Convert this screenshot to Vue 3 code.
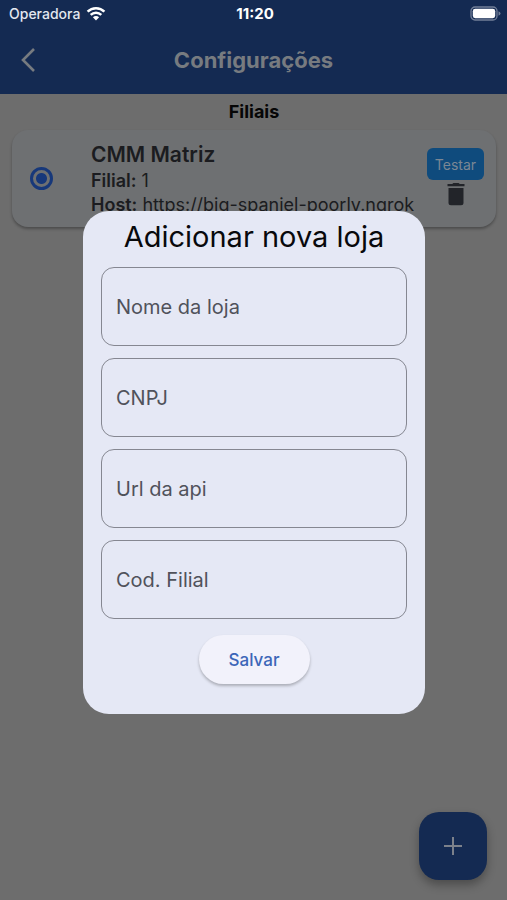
<script setup>
import { ref } from 'vue';

const selected = ref('1');

const stores = ref([
  {
    id: '1',
    name: 'CMM Matriz',
    branch: '1',
    host: 'https://big-spaniel-poorly.ngrok',
  },
]);

const fields = [
  { id: 'name', label: 'Nome da loja' },
  { id: 'cnpj', label: 'CNPJ' },
  { id: 'url', label: 'Url da api' },
  { id: 'branch', label: 'Cod. Filial' },
];

const form = ref({ name: '', cnpj: '', url: '', branch: '' });

const isVisible = ref(true);

const openDialog = () => {
  isVisible.value = true;
};

const removeStore = (id) => {
  stores.value = stores.value.filter((store) => store.id !== id);
};

const save = () => {
  stores.value.push({
    id: String(Date.now()),
    name: form.value.name,
    branch: form.value.branch,
    host: form.value.url,
  });
  form.value = { name: '', cnpj: '', url: '', branch: '' };
  isVisible.value = false;
};
</script>

<template>
  <div class="page">
    <header class="top">
      <div class="status">
        <div class="carrier">
          <span>Operadora</span>
          <svg width="20" height="15" viewBox="0 0 20 15" aria-hidden="true">
            <g fill="none" stroke="#fff" stroke-width="2.5">
              <path d="M1.6 5.6a12 12 0 0 1 16.8 0" />
              <path d="M4.7 8.8a7.6 7.6 0 0 1 10.6 0" />
            </g>
            <path d="M10 14.4 6.9 11.2a4.4 4.4 0 0 1 6.2 0z" fill="#fff" />
          </svg>
        </div>
        <span class="clock">11:20</span>
        <svg
          class="battery"
          width="31"
          height="15"
          viewBox="0 0 31 15"
          aria-hidden="true"
        >
          <rect
            x="1"
            y="1"
            width="26"
            height="13"
            rx="4"
            fill="none"
            stroke="#727f98"
            stroke-width="1.3"
          />
          <rect x="2.8" y="2.8" width="22.4" height="9.4" rx="2.4" fill="#fff" />
          <path d="M28.5 5.2q2 .8 2 2.3t-2 2.3z" fill="#727f98" />
        </svg>
      </div>
      <div class="nav">
        <button class="back" aria-label="Voltar">
          <svg width="16" height="26" viewBox="0 0 16 26">
            <path
              d="M14 2 3 13l11 11"
              fill="none"
              stroke="#777b80"
              stroke-width="2.6"
            />
          </svg>
        </button>
        <h1>Configurações</h1>
      </div>
    </header>

    <main>
      <h2>Filiais</h2>
      <div v-for="store in stores" :key="store.id" class="card">
        <input
          v-model="selected"
          class="radio"
          type="radio"
          name="store"
          :value="store.id"
          :aria-label="store.name"
        />
        <div class="info">
          <h3>{{ store.name }}</h3>
          <p><b>Filial:</b> {{ store.branch }}</p>
          <p><b>Host:</b> {{ store.host }}</p>
        </div>
        <div class="actions">
          <button class="test">Testar</button>
          <button
            class="trash"
            aria-label="Excluir"
            @click="removeStore(store.id)"
          >
            <svg width="18" height="24" viewBox="0 0 18 24">
              <path
                d="M.5 3.300V1h4.700l1.200-1h5.200l1.200 1h4.700v2.300zM1.500 5h15v14.700a2.500 2.500 0 0 1-2.500 2.500H4a2.500 2.500 0 0 1-2.500-2.500z"
                fill="#222429"
              />
            </svg>
          </button>
        </div>
      </div>
    </main>

    <button class="fab" aria-label="Adicionar" @click="openDialog">
      <svg width="18" height="18" viewBox="0 0 18 18">
        <path d="M9 0v18M0 9h18" fill="none" stroke="#7c818b" stroke-width="2" />
      </svg>
    </button>

    <div v-if="isVisible" class="backdrop">
      <form
        class="dialog"
        role="dialog"
        aria-labelledby="dialog-title"
        @submit.prevent="save"
      >
        <h2 id="dialog-title">Adicionar nova loja</h2>
        <input
          v-for="field in fields"
          :key="field.id"
          v-model="form[field.id]"
          class="field"
          type="text"
          :placeholder="field.label"
          :aria-label="field.label"
        />
        <button class="save" type="submit">Salvar</button>
      </form>
    </div>
  </div>
</template>

<style>
body {
  margin: 0;
  background: #6d6d6d;
}
</style>

<style scoped>
.page {
  min-height: 100vh;
  font-family: Inter, Roboto, sans-serif;
  color: #1b1c20;
}

h1,
h2,
h3,
p {
  margin: 0;
}

button {
  border: none;
  padding: 0;
  font-family: inherit;
  cursor: pointer;
}

.top {
  background: #142a52;
  padding-bottom: 8px;
}

.status {
  display: grid;
  grid-template-columns: 1fr auto 1fr;
  align-items: center;
  height: 26px;
  padding: 0 6px 0 9px;
  color: #fff;
  font-size: 14px;
}

.carrier {
  display: flex;
  align-items: center;
  gap: 6px;
  color: #e3e7ef;
  font-weight: 500;
}

.clock {
  font-size: 15px;
  font-weight: 700;
}

.battery {
  justify-self: end;
}

.nav {
  display: grid;
  grid-template-columns: 48px 1fr 48px;
  align-items: center;
  height: 60px;
  padding: 12px 4px 4px;
  box-sizing: border-box;
}

.back {
  display: flex;
  justify-content: center;
  background: none;
}

.nav h1 {
  font-size: 22px;
  line-height: 32px;
  font-weight: 700;
  text-align: center;
  color: #777b80;
}

main {
  padding: 6px 11px 6px 12px;
}

main h2 {
  font-size: 18px;
  line-height: 24px;
  font-weight: 700;
  text-align: center;
  color: #060606;
}

.card {
  display: flex;
  align-items: flex-start;
  height: 97px;
  margin-top: 6px;
  padding: 0 12px 0 18px;
  box-sizing: border-box;
  border-radius: 16px;
  background: #6e7072;
  box-shadow: 0 2px 3px rgba(0, 0, 0, 0.3);
}

.radio {
  appearance: none;
  flex: none;
  align-self: center;
  width: 23px;
  height: 23px;
  margin: 0 38px 0 0;
  border: 3px solid #17387a;
  border-radius: 50%;
  background: radial-gradient(circle, transparent 0 5px, transparent 6px);
}

.radio:checked {
  background: radial-gradient(circle, #17387a 0 5px, transparent 6px);
}

.info {
  flex: 1;
  min-width: 0;
  padding-top: 11px;
}

.info h3 {
  font-size: 21px;
  line-height: 28px;
  font-weight: 600;
}

.info p {
  font-size: 18px;
  line-height: 24px;
  white-space: nowrap;
}

.info b {
  font-weight: 600;
}

.actions {
  display: flex;
  flex-direction: column;
  align-items: center;
  gap: 3px;
  padding-top: 18px;
}

.test {
  width: 57px;
  height: 32px;
  border-radius: 6px;
  background: #0f4b7d;
  color: #7b8794;
  font-size: 14px;
}

.trash {
  display: flex;
  background: none;
}

.fab {
  position: fixed;
  right: 20px;
  bottom: 20px;
  display: flex;
  align-items: center;
  justify-content: center;
  width: 68px;
  height: 68px;
  border-radius: 20px;
  background: #142a52;
  box-shadow: 0 5px 10px rgba(0, 0, 0, 0.3);
}

.backdrop {
  position: fixed;
  inset: 0;
  display: flex;
  align-items: center;
  justify-content: center;
  padding: 25px 82px 0 83px;
}

.dialog {
  display: flex;
  flex-direction: column;
  align-items: center;
  gap: 12px;
  width: 100%;
  padding: 7px 18px 30px;
  box-sizing: border-box;
  border-radius: 26px;
  background: #e5e8f5;
}

.dialog h2 {
  font-size: 29px;
  line-height: 37px;
  font-weight: 400;
  color: #08090c;
}

.field {
  width: 100%;
  height: 79px;
  padding: 0 14px;
  box-sizing: border-box;
  border: 1px solid #858791;
  border-radius: 13px;
  outline: none;
  background: transparent;
  color: #1b1c20;
  font-family: inherit;
  font-size: 20px;
}

.field::placeholder {
  color: #50525b;
  opacity: 1;
}

.save {
  width: 111px;
  height: 49px;
  margin-top: 4px;
  border-radius: 25px;
  background: #f2f2fb;
  box-shadow: 0 2px 3px rgba(0, 0, 0, 0.25);
  color: #3c66b8;
  font-size: 17px;
  font-weight: 500;
}
</style>
